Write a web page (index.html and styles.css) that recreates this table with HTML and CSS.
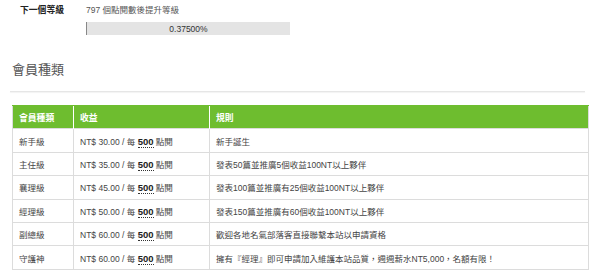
FILE: index.html
```html
<!DOCTYPE html>
<html lang="zh-Hant">
<head>
<meta charset="utf-8">
<link rel="stylesheet" href="styles.css">
</head>
<body>
<div class="level-row">
  <div class="level-label">下一個等級</div>
  <div class="level-value">
    <div class="level-desc">797 個點閱數後提升等級</div>
    <div class="bar"><span class="bar-text">0.37500%</span></div>
  </div>
</div>
<h2 class="title">會員種類</h2>
<div class="sep"></div>
<table class="grid">
  <thead>
    <tr><th class="c1">會員種類</th><th class="c2">收益</th><th class="c3">規則</th></tr>
  </thead>
  <tbody>
    <tr><td>新手級</td><td>NT$ 30.00 / 每 <abbr>500</abbr> 點閱</td><td>新手誕生</td></tr>
    <tr><td>主任級</td><td>NT$ 35.00 / 每 <abbr>500</abbr> 點閱</td><td>發表50篇並推廣5個收益100NT以上夥伴</td></tr>
    <tr><td>襄理級</td><td>NT$ 45.00 / 每 <abbr>500</abbr> 點閱</td><td>發表100篇並推廣有25個收益100NT以上夥伴</td></tr>
    <tr><td>經理級</td><td>NT$ 50.00 / 每 <abbr>500</abbr> 點閱</td><td>發表150篇並推廣有60個收益100NT以上夥伴</td></tr>
    <tr><td>副總級</td><td>NT$ 60.00 / 每 <abbr>500</abbr> 點閱</td><td>歡迎各地名氣部落客直接聯繫本站以申請資格</td></tr>
    <tr><td>守護神</td><td>NT$ 60.00 / 每 <abbr>500</abbr> 點閱</td><td>擁有『經理』即可申請加入維護本站品質，週週薪水NT5,000，名額有限！</td></tr>
  </tbody>
</table>
</body>
</html>
```
FILE: styles.css
```css
html, body {
  margin: 0;
  padding: 0;
  background: #fff;
}
body {
  font-family: "Liberation Sans", "Noto Sans CJK TC", sans-serif;
  font-size: 8.5px;
  color: #444;
}
.level-row {
  display: flex;
  padding: 5px 0 0 20px;
}
.level-label {
  width: 66px;
  font-weight: bold;
  color: #222;
  font-size: 8.8px;
  line-height: 11px;
}
.level-value {
  display: flex;
  flex-direction: column;
}
.level-desc {
  line-height: 11px;
  color: #555;
}
.bar {
  margin-top: 6px;
  width: 203px;
  height: 13px;
  background: #e4e4e4;
  border-left: 1px solid #888;
  display: flex;
  align-items: center;
  justify-content: center;
}
.bar-text {
  color: #333;
  font-size: 8.5px;
}
.title {
  margin: 27px 0 0 12px;
  font-size: 13px;
  line-height: 16px;
  font-weight: normal;
  color: #555;
}
.sep {
  margin: 13px 15px 0 10px;
  height: 1px;
  background: #e6e6e6;
  box-shadow: 0 1px 1px #f2f2f2;
}
.grid {
  margin: 13px 0 0 12px;
  width: 577px;
  border-collapse: collapse;
  border: 1px solid #dcdcdc;
}
.grid th {
  background: #6ebd2f;
  color: #fff;
  font-weight: bold;
  text-align: left;
  height: 22.4px;
  padding: 0 6px;
  font-size: 8.8px;
  border-left: 1px solid #fff;
  border-top: 1px solid #6ebd2f;
}
.grid th.c1 { width: 48px; border-left: 0; }
.grid th.c2 { width: 123px; }
.grid td {
  height: 22.4px;
  padding: 0 6px;
  border: 1px solid #dcdcdc;
  color: #444;
  white-space: nowrap;
}
.grid abbr {
  text-decoration: none;
  border-bottom: 1px dotted #333;
  font-weight: bold;
  font-size: 9.5px;
  color: #222;
}
```
